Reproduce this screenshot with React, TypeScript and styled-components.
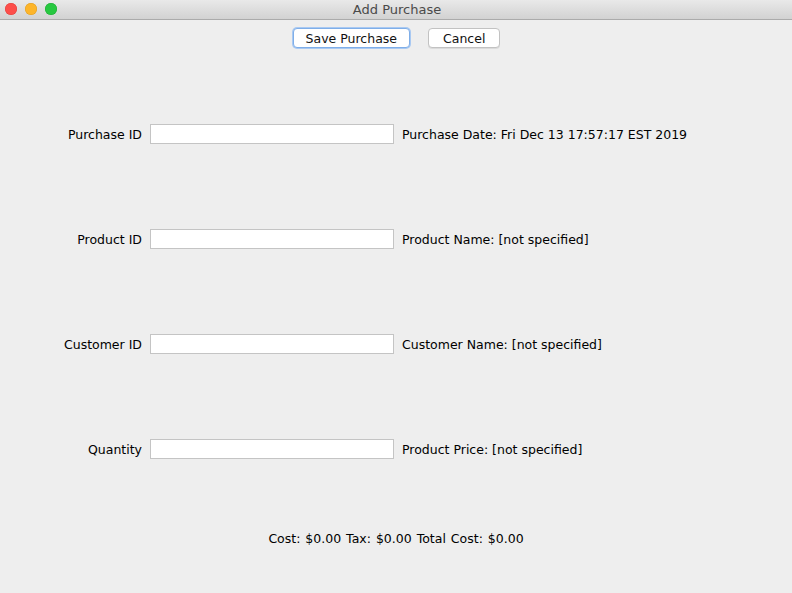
import styled, { createGlobalStyle } from "styled-components";

const GlobalStyle = createGlobalStyle`
  html, body {
    margin: 0;
    padding: 0;
    background: #eeeeee;
  }
  body {
    font-family: "DejaVu Sans", "Liberation Sans", sans-serif;
    font-size: 12.5px;
    color: #000;
  }
`;

type Row = {
  label: string;
  info: string;
};

const rows: Row[] = [
  { label: "Purchase ID", info: "Purchase Date: Fri Dec 13 17:57:17 EST 2019" },
  { label: "Product ID", info: "Product Name: [not specified]" },
  { label: "Customer ID", info: "Customer Name: [not specified]" },
  { label: "Quantity", info: "Product Price: [not specified]" },
];

export const App = () => {
  return (
    <Window>
      <GlobalStyle />
      <TitleBar>
        <Lights>
          <Light color="#fd4e4a" edge="#e0403b" />
          <Light color="#fdb52a" edge="#df9d22" />
          <Light color="#27c840" edge="#1faa33" />
        </Lights>
        <Title>Add Purchase</Title>
      </TitleBar>
      <Toolbar>
        <Button primary>Save Purchase</Button>
        <Button>Cancel</Button>
      </Toolbar>
      <Form>
        {rows.map((row) => (
          <FormRow key={row.label}>
            <Label>{row.label}</Label>
            <Field type="text" />
            <Info>{row.info}</Info>
          </FormRow>
        ))}
      </Form>
      <Totals>Cost: $0.00 Tax: $0.00 Total Cost: $0.00</Totals>
    </Window>
  );
};

export default App;

const Window = styled.div`
  width: 792px;
  height: 593px;
  background: #eeeeee;
  overflow: hidden;
`;

const TitleBar = styled.div`
  position: relative;
  height: 19px;
  background: linear-gradient(#e9e9e9, #d2d2d2);
  border-bottom: 1px solid #ababab;
  display: flex;
  align-items: center;
  justify-content: center;
`;

const Lights = styled.div`
  position: absolute;
  left: 5px;
  top: 3px;
  display: flex;
  gap: 8px;
`;

const Light = styled.span<{ color: string; edge: string }>`
  width: 12px;
  height: 12px;
  border-radius: 50%;
  background: ${(p) => p.color};
  box-shadow: inset 0 0 0 0.5px ${(p) => p.edge};
`;

const Title = styled.span`
  font-size: 13px;
  color: #4a4a4a;
  margin-left: 2px;
`;

const Toolbar = styled.div`
  display: flex;
  justify-content: center;
  gap: 18px;
  padding-top: 8px;
  padding-left: 1px;
`;

const Button = styled.button<{ primary?: boolean }>`
  height: 20px;
  padding: 0 ${(p) => (p.primary ? "12px" : "14px")};
  font-family: inherit;
  font-size: 12.5px;
  line-height: 18px;
  padding-top: 1px;
  color: #111;
  background: #ffffff;
  border: 1px solid ${(p) => (p.primary ? "#7faee8" : "#c2c2c2")};
  border-radius: 4px;
  box-shadow: ${(p) =>
    p.primary ? "0 0 0 1px #a9c9f2" : "0 1px 0 rgba(0,0,0,0.08)"};
`;

const Form = styled.div`
  display: flex;
  flex-direction: column;
  gap: 85px;
  margin-top: 76px;
`;

const FormRow = styled.div`
  display: grid;
  grid-template-columns: 142px 244px auto;
  column-gap: 8px;
  align-items: center;
  height: 20px;
`;

const Label = styled.span`
  text-align: right;
  padding-top: 1px;
`;

const Field = styled.input`
  box-sizing: border-box;
  height: 20px;
  margin: 0;
  border: 1px solid #c4c4c4;
  background: #ffffff;
  outline: none;
`;

const Info = styled.span`
  white-space: nowrap;
  padding-top: 1px;
`;

const Totals = styled.div`
  margin-top: 72px;
  text-align: center;
  word-spacing: 1px;
`;
